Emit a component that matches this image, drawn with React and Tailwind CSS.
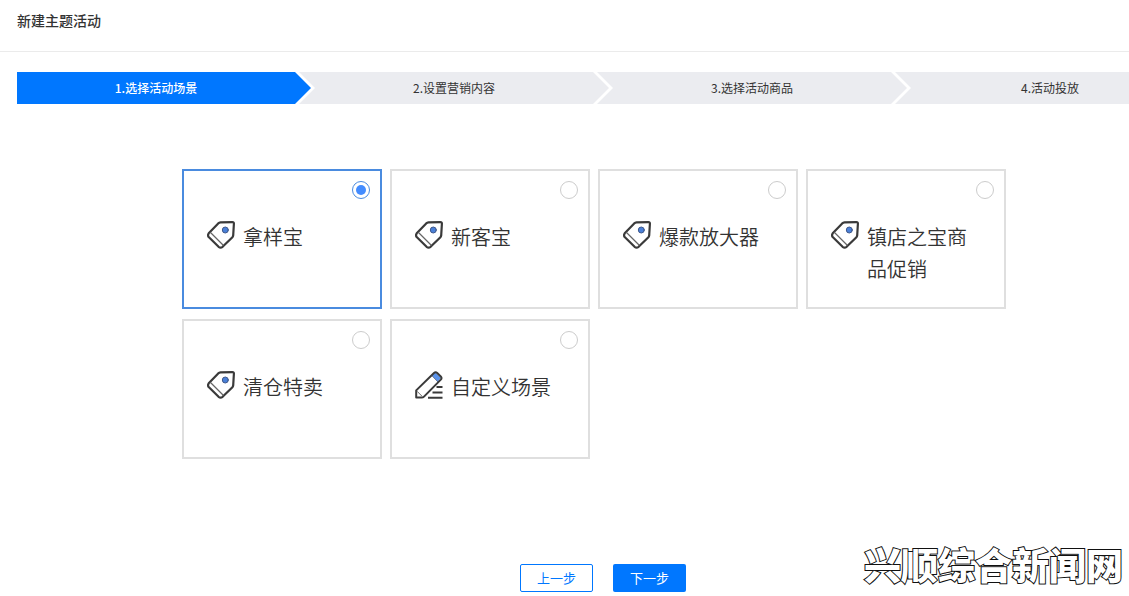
import React, { useState } from "react";

const steps = [
  "1.选择活动场景",
  "2.设置营销内容",
  "3.选择活动商品",
  "4.活动投放",
];

const scenes = [
  { id: "sample", name: "拿样宝", icon: TagIcon },
  { id: "newcomer", name: "新客宝", icon: TagIcon },
  { id: "hot", name: "爆款放大器", icon: TagIcon },
  { id: "treasure", name: "镇店之宝商品促销", icon: TagIcon },
  { id: "clearance", name: "清仓特卖", icon: TagIcon },
  { id: "custom", name: "自定义场景", icon: PencilIcon },
];

function TagIcon() {
  return (
    <svg
      className="h-7 w-7 shrink-0"
      viewBox="0 0 28 28"
      fill="none"
      strokeLinejoin="round"
      strokeLinecap="round"
    >
      <path
        d="M13.5 1.4 L25.4 1.2 Q27 1.2 26.9 2.8 L26.2 14.4 Q26.1 15.4 25.4 16.2 L15.6 25.8 Q13.6 27.4 11.6 25.8 L1.7 16 Q0.4 14.2 1.7 12.3 L11.2 2.4 Q12.2 1.5 13.5 1.4 Z"
        stroke="#3a3a3a"
        strokeWidth="2.2"
      />
      <path d="M4 12 L16 24" stroke="#666666" strokeWidth="1.2" />
      <circle cx="18.3" cy="9" r="3" fill="#4a80d8" stroke="#40588a" />
    </svg>
  );
}

function PencilIcon() {
  return (
    <svg
      className="h-7 w-7 shrink-0"
      viewBox="0 0 28 28"
      fill="none"
      strokeLinejoin="round"
      strokeLinecap="round"
    >
      <path d="M16.8 4.6 L20.4 1.4 L26 6.8 L22.8 10.8 Z" fill="#5b93ea" />
      <path
        d="M1.2 26.6 L1.2 19.4 L19 2 Q20.6 0.6 22.2 2 L25.8 5.4 Q27.2 7 25.8 8.6 L9 25.6 Q8 26.6 6.6 26.6 Z"
        stroke="#3a3a3a"
        strokeWidth="2"
      />
      <path d="M16.8 4.6 L22.8 10.8" stroke="#44506a" strokeWidth="0.7" />
      <path d="M2.4 20.6 L7 25.2" stroke="#666666" strokeWidth="1" />
      <path
        d="M21.5 16 H27.5 M17.5 21.5 H27.5 M13 26.8 H27.5"
        stroke="#3a3a3a"
        strokeWidth="2"
        strokeLinecap="butt"
      />
    </svg>
  );
}

function StepArrow({ active }) {
  return (
    <svg className="h-8 w-5 shrink-0 bg-[#ebecf0]" viewBox="0 0 20 32">
      <path d="M0 0 H4 L20 16 L4 32 H0 Z" fill="#ffffff" />
      <path
        d="M0 0 L16 16 L0 32 Z"
        fill={active ? "#0077ff" : "#ebecf0"}
      />
    </svg>
  );
}

function StepBar({ current }) {
  return (
    <ol className="flex overflow-hidden pl-[17px] text-xs">
      {steps.map((step, index) => {
        const active = index === current;
        return (
          <li key={step} className="flex h-8 w-[298px] shrink-0">
            <span
              className={
                active
                  ? "flex flex-1 items-center justify-center bg-[#0077ff] font-medium text-white"
                  : "flex flex-1 items-center justify-center bg-[#ebecf0] text-[#333333]"
              }
            >
              {step}
            </span>
            <StepArrow active={active} />
          </li>
        );
      })}
    </ol>
  );
}

function SceneCard({ scene, checked, onSelect }) {
  const Icon = scene.icon;
  return (
    <label
      className={`flex h-[140px] w-[200px] cursor-pointer flex-col border-2 ${
        checked ? "border-[#4a8bdf]" : "border-[#dfdfdf]"
      }`}
    >
      <input
        type="radio"
        name="scene"
        value={scene.id}
        checked={checked}
        onChange={onSelect}
        className="mt-2.5 mr-2.5 h-[18px] w-[18px] appearance-none self-end rounded-full border border-[#cccccc] bg-white p-[3px] checked:border-[#4a8bdf] checked:bg-[#438cff] checked:bg-clip-content"
      />
      <span className="mt-[22px] flex items-start gap-2 px-[23px]">
        <Icon />
        <span className="text-xl leading-8 font-[350] text-[#333333]">
          {scene.name}
        </span>
      </span>
    </label>
  );
}

export default function App() {
  const [selected, setSelected] = useState("sample");

  return (
    <div className="relative min-h-screen overflow-hidden bg-white font-['Noto_Sans_CJK_SC',sans-serif] text-[#333333]">
      <header className="border-b border-[#ebebeb] px-[17px] pt-2.5 pb-[21px]">
        <h1 className="text-sm leading-5 font-medium">新建主题活动</h1>
      </header>

      <main className="pt-5">
        <StepBar current={0} />

        {/* Scene options */}
        <div className="flex justify-center pt-[65px] pl-[59px]">
          <div className="grid grid-cols-[repeat(4,200px)] gap-x-2 gap-y-2.5">
            {scenes.map((scene) => (
              <SceneCard
                key={scene.id}
                scene={scene}
                checked={selected === scene.id}
                onSelect={() => setSelected(scene.id)}
              />
            ))}
          </div>
        </div>

        <div className="flex justify-center gap-5 pt-[105px] pl-[77px] text-[13px]">
          <button
            type="button"
            className="h-7 w-[73px] rounded-xs border border-[#0077ff] bg-white text-[#0077ff]"
          >
            上一步
          </button>
          <button
            type="button"
            className="h-7 w-[73px] rounded-xs bg-[#0077ff] text-white"
          >
            下一步
          </button>
        </div>
      </main>

      {/* Site mark */}
      <div className="pointer-events-none absolute right-1.5 bottom-2 text-[37px] leading-12 font-black text-white [-webkit-text-stroke:2px_#111111] [paint-order:stroke_fill]">
        兴顺综合新闻网
      </div>
    </div>
  );
}
